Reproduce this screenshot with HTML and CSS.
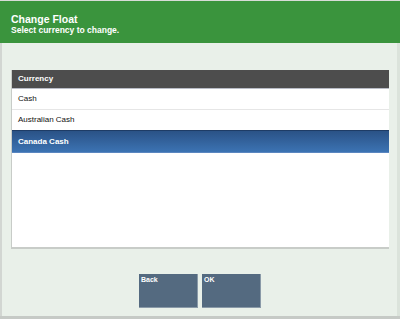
FILE: index.html
```html
<!DOCTYPE html>
<html lang="en">
<head>
  <meta charset="UTF-8" />
  <meta name="viewport" content="width=device-width, initial-scale=1.0"/>
  <title>Change Float</title>
  <link rel="stylesheet" href="styles.css">
</head>
<body>
  <div class="screen">
    <div class="header">
      <h1>Change Float</h1>
      <p>Select currency to change.</p>
    </div>

    <div class="content">
      <div class="list">
        <div class="list-head">Currency</div>
        <div class="row">Cash</div>
        <div class="row">Australian Cash</div>
        <div class="row selected">Canada Cash</div>
      </div>

      <div class="buttons">
        <button>Back</button>
        <button>OK</button>
      </div>
    </div>
  </div>
</body>
</html>
```

FILE: styles.css
```css
body {
  margin: 0;
  font-family: "Liberation Sans", Arial, sans-serif;
  background-color: #e9f0e9;
}

.screen {
  width: 400px;
  height: 319px;
  box-sizing: border-box;
  display: flex;
  flex-direction: column;
  border-top: 1px solid #d8dcd8;
  border-bottom: 3px solid #c6cac6;
  background-color: #e9f0e9;
}

.header {
  height: 42px;
  box-sizing: border-box;
  padding: 12px 11px 0;
  background-color: #3a943d;
  color: #fff;
}

.header h1 {
  margin: 0;
  font-size: 10.5px;
  font-weight: bold;
  line-height: 12px;
}

.header p {
  margin: 0;
  font-size: 8.5px;
  font-weight: bold;
  line-height: 10px;
}

.content {
  flex: 1;
  display: flex;
  flex-direction: column;
  padding: 27px 10px 0 11px;
  border-left: 2px solid #d2d6d2;
  border-right: 3px solid #dbe3db;
}

.list {
  margin: 0 -2px 0 -2px;
  height: 177px;
  background-color: #fff;
  border-left: 1px solid #c8ccc8;
  border-bottom: 2px solid #c8ccc8;
  font-size: 8px;
  display: flex;
  flex-direction: column;
}

.list-head {
  height: 18px;
  line-height: 18px;
  padding-left: 6px;
  background-color: #4d4d4d;
  color: #fff;
  font-weight: bold;
  border-bottom: 1px solid #b9bcc6;
}

.row {
  height: 20px;
  line-height: 20px;
  padding-left: 6px;
  color: #111;
  border-bottom: 1px solid #e6e6e6;
}

.row.selected {
  height: 21px;
  line-height: 21px;
  background: linear-gradient(#2a5286, #3c73b3);
  color: #fff;
  font-weight: bold;
  border-top: 1px solid #1e3c66;
  border-bottom: 1px solid #5a86c0;
  margin-top: -1px;
}

.buttons {
  display: flex;
  justify-content: center;
  gap: 4px;
  margin-top: 25px;
}

.buttons button {
  width: 59px;
  height: 34px;
  padding: 2px;
  border: none;
  border-right: 1px solid #8a9aa8;
  border-bottom: 1px solid #8a9aa8;
  background-color: #546a80;
  color: #fff;
  font-family: "Liberation Sans", Arial, sans-serif;
  font-size: 7px;
  font-weight: bold;
  text-align: left;
  display: flex;
  align-items: flex-start;
}
```
